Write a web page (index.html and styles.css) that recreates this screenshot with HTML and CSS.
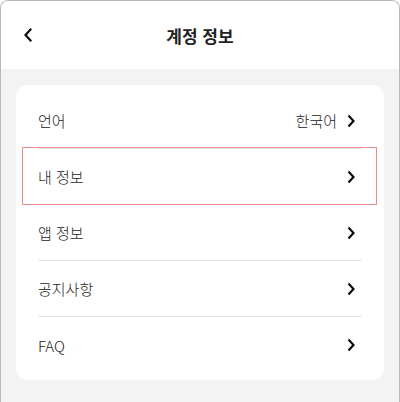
FILE: index.html
```html
<!DOCTYPE html>
<html lang="ko">
<head>
<meta charset="utf-8">
<link rel="stylesheet" href="styles.css">
</head>
<body>
<div class="frame">
  <header class="header">
    <span class="back">
      <svg width="10" height="14" viewBox="0 0 10 14"><path d="M7.5 1.5 L2.5 7 L7.5 12.5" fill="none" stroke="#111" stroke-width="2.2" stroke-linecap="square" stroke-linejoin="miter"/></svg>
    </span>
    <h1 class="title">계정 정보</h1>
  </header>
  <main class="content">
    <div class="card">
      <div class="row"><span class="label">언어</span><span class="right"><span class="value">한국어</span><svg class="chev" width="10" height="14" viewBox="0 0 10 14"><path d="M2.5 1.5 L7.5 7 L2.5 12.5" fill="none" stroke="#111" stroke-width="2.2"/></svg></span></div>
      <div class="row selected"><span class="label">내 정보</span><span class="right"><svg class="chev" width="10" height="14" viewBox="0 0 10 14"><path d="M2.5 1.5 L7.5 7 L2.5 12.5" fill="none" stroke="#111" stroke-width="2.2"/></svg></span></div>
      <div class="row"><span class="label">앱 정보</span><span class="right"><svg class="chev" width="10" height="14" viewBox="0 0 10 14"><path d="M2.5 1.5 L7.5 7 L2.5 12.5" fill="none" stroke="#111" stroke-width="2.2"/></svg></span></div>
      <div class="row"><span class="label">공지사항</span><span class="right"><svg class="chev" width="10" height="14" viewBox="0 0 10 14"><path d="M2.5 1.5 L7.5 7 L2.5 12.5" fill="none" stroke="#111" stroke-width="2.2"/></svg></span></div>
      <div class="row last"><span class="label">FAQ</span><span class="right"><svg class="chev" width="10" height="14" viewBox="0 0 10 14"><path d="M2.5 1.5 L7.5 7 L2.5 12.5" fill="none" stroke="#111" stroke-width="2.2"/></svg></span></div>
    </div>
  </main>
</div>
</body>
</html>
```
FILE: styles.css
```css
* { box-sizing: border-box; }
html, body { margin: 0; padding: 0; background: #ffffff; }
body {
  font-family: "Noto Sans CJK KR", "Noto Sans", sans-serif;
  color: #222;
  width: 400px;
  height: 402px;
  overflow: hidden;
}
.frame {
  width: 400px;
  height: 420px;
  border: 1px solid #b9b9b9;
  border-bottom: none;
  border-radius: 8px 8px 0 0;
  overflow: hidden;
  background: #f3f3f3;
  display: flex;
  flex-direction: column;
}
.header {
  height: 68px;
  background: #fff;
  position: relative;
  display: flex;
  align-items: center;
  justify-content: center;
  flex-shrink: 0;
}
.back {
  position: absolute;
  left: 22px;
  top: 27px;
  display: flex;
}
.title {
  margin: 0;
  font-size: 17px;
  font-weight: 700;
  color: #222;
  line-height: 1;
}
.content {
  padding: 16px 15px 0 15px;
}
.card {
  background: #fff;
  border-radius: 12px;
  padding: 8px 0 7px 0;
}
.row {
  height: 56px;
  margin: 0 22px;
  display: flex;
  align-items: center;
  justify-content: space-between;
  border-bottom: 1px solid #e4e4e4;
  position: relative;
  font-size: 15px;
  font-weight: 300;
}
.row.last { border-bottom: none; }
.row.selected::after {
  content: "";
  position: absolute;
  left: -16px;
  right: -15px;
  top: -2px;
  bottom: -1px;
  border: 1.5px solid #f08a8a;
}
.label { color: #222; }
.right {
  display: flex;
  align-items: center;
  gap: 9px;
  padding-right: 6px;
}
.value { color: #222; }
.chev { display: block; }
```
